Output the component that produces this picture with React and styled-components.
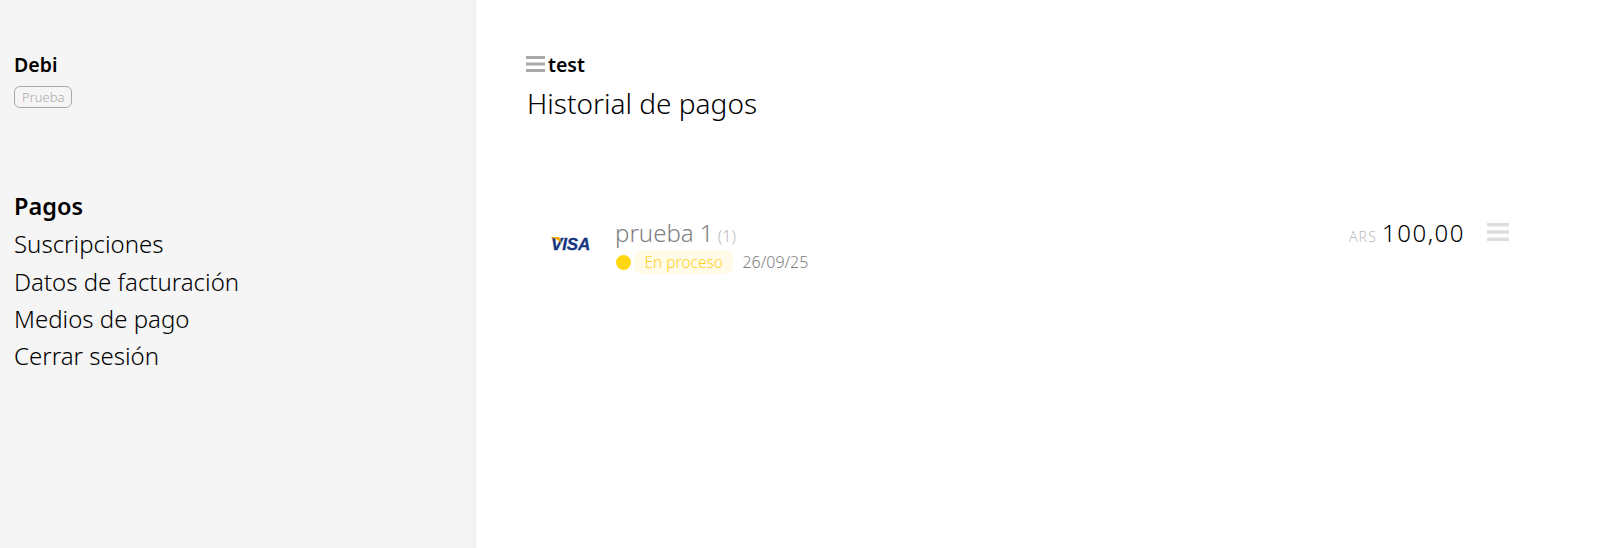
import React from 'react'
import styled, { createGlobalStyle } from 'styled-components'

const GlobalStyle = createGlobalStyle`
  html, body { margin: 0; padding: 0; height: 100%; background: #fff; }
  body { font-family: "Noto Sans", "Open Sans", sans-serif; color: #000; }
`

function MenuIcon({ color, width, height }) {
  return (
    <svg width={width} height={height} viewBox="0 0 22 16" preserveAspectRatio="none">
      <rect x="0" y="0" width="22" height="3" fill={color} />
      <rect x="0" y="6.5" width="22" height="3" fill={color} />
      <rect x="0" y="13" width="22" height="3" fill={color} />
    </svg>
  )
}

function VisaLogo() {
  return (
    <VisaWrap>
      <VisaFlag width="10" height="7" viewBox="0 0 10 7">
        <path d="M0 0 H7 C8.5 0 9.5 1 10 6.5 C8 3.5 5 1.5 0 0.6 Z" fill="#f2a900" />
      </VisaFlag>
      <VisaText>VISA</VisaText>
    </VisaWrap>
  )
}

export default function App() {
  return (
    <Page>
      <GlobalStyle />
      <Sidebar>
        <Brand>Debi</Brand>
        <Badge>Prueba</Badge>
        <Nav>
          <NavItem $active>Pagos</NavItem>
          <NavItem>Suscripciones</NavItem>
          <NavItem>Datos de facturación</NavItem>
          <NavItem>Medios de pago</NavItem>
          <NavItem>Cerrar sesión</NavItem>
        </Nav>
      </Sidebar>
      <Main>
        <Crumb>
          <MenuIcon color="#aaaaaa" width={19} height={16} />
          <span>test</span>
        </Crumb>
        <Title>Historial de pagos</Title>
        <PaymentRow>
          <VisaLogo />
          <Info>
            <Name>prueba 1 <Count>(1)</Count></Name>
            <Meta>
              <Dot />
              <Status>En proceso</Status>
              <DateText>26/09/25</DateText>
            </Meta>
          </Info>
          <Amount>
            <Currency>ARS</Currency>
            <Value>100,00</Value>
          </Amount>
          <RowMenu>
            <MenuIcon color="#dddddd" width={22} height={18} />
          </RowMenu>
        </PaymentRow>
      </Main>
    </Page>
  )
}

const Page = styled.div`
  display: flex;
  height: 548px;
  overflow: hidden;
`

const Sidebar = styled.aside`
  width: 476px;
  flex-shrink: 0;
  box-sizing: border-box;
  padding: 53px 14px 0;
  background: #f5f5f5;
  box-shadow: inset -10px 0 10px -10px rgba(0, 0, 0, 0.06);
`

const Brand = styled.div`
  font-size: 19.5px;
  font-weight: 600;
  line-height: 24px;
`

const Badge = styled.div`
  display: inline-block;
  box-sizing: border-box;
  height: 22px;
  margin-top: 9px;
  padding: 0 7px;
  border: 1px solid #aaa;
  border-radius: 6px;
  font-size: 13px;
  font-weight: 300;
  line-height: 20px;
  color: #aaa;
`

const Nav = styled.nav`
  display: flex;
  flex-direction: column;
  margin-top: 80px;
`

const NavItem = styled.a`
  font-size: ${(p) => (p.$active ? '23.5px' : '24px')};
  line-height: 37.3px;
  font-weight: ${(p) => (p.$active ? 600 : 300)};
  color: #000;
`

const Main = styled.main`
  flex: 1;
  padding: 52px 0 0 50px;
`

const Crumb = styled.div`
  display: flex;
  align-items: center;
  gap: 3px;
  height: 24px;
  font-size: 19.5px;
  font-weight: 600;
`

const Title = styled.h1`
  margin: 8px 0 0 1px;
  font-size: 28px;
  font-weight: 300;
  line-height: 38px;
  color: #000;
`

const PaymentRow = styled.div`
  display: flex;
  align-items: flex-start;
  margin-top: 94px;
  padding: 0 0 0 25px;
`

const VisaWrap = styled.div`
  position: relative;
  width: 39px;
  margin-top: 19px;
  margin-right: 24px;
`

const VisaFlag = styled.svg`
  position: absolute;
  left: 0;
  top: 2px;
`

const VisaText = styled.span`
  display: block;
  font-family: "Liberation Sans", sans-serif;
  font-size: 17px;
  font-weight: 700;
  font-style: italic;
  line-height: 20px;
  color: #16357f;
  text-align: right;
  letter-spacing: -0.2px;
  -webkit-text-stroke: 0.3px #16357f;
`

const Info = styled.div`
  display: flex;
  flex-direction: column;
`

const Name = styled.div`
  margin-top: 2px;
  margin-left: 1px;
  font-size: 24px;
  font-weight: 300;
  line-height: 30px;
  color: #808080;
`

const Count = styled.span`
  font-size: 16px;
  color: #bbb;
  margin-left: -2px;
`

const Meta = styled.div`
  display: flex;
  align-items: center;
  margin-top: -1px;
  margin-left: 2px;
`

const Dot = styled.span`
  width: 15px;
  height: 15px;
  border-radius: 50%;
  background: #ffd60f;
`

const Status = styled.span`
  margin-left: 3px;
  padding: 0 10.5px;
  border-radius: 7px;
  background: #fffbe8;
  font-size: 15.5px;
  font-weight: 300;
  line-height: 24px;
  color: #ffd21f;
`

const DateText = styled.span`
  margin-left: 9px;
  font-size: 16px;
  font-weight: 300;
  color: #808080;
`

const Amount = styled.div`
  display: flex;
  align-items: baseline;
  gap: 5px;
  margin-left: auto;
`

const Currency = styled.span`
  font-size: 14px;
  font-weight: 300;
  letter-spacing: 1.2px;
  color: #bbb;
`

const Value = styled.span`
  font-size: 24px;
  font-weight: 300;
  letter-spacing: 1.5px;
  color: #000;
`

const RowMenu = styled.div`
  margin: 7px 97px 0 22px;
`
